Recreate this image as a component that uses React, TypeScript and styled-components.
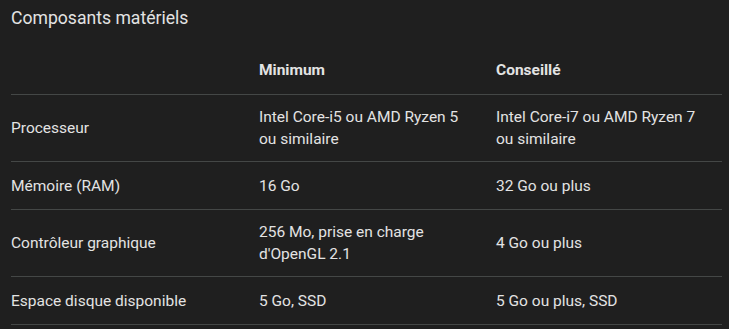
import styled, { createGlobalStyle } from 'styled-components'

const GlobalStyle = createGlobalStyle`
  html, body {
    margin: 0;
    background: #1f1f1f;
  }
  body {
    font-family: Roboto, "Liberation Sans", sans-serif;
    color: #e3e3e3;
  }
`

const Page = styled.div`
  padding: 5px 7px 0 11px;
`

const Title = styled.h2`
  margin: 0;
  font-size: 17.6px;
  font-weight: 400;
  line-height: 26px;
`

const Table = styled.div`
  display: grid;
  grid-template-columns: 248px 237px 1fr;
  margin-top: 16px;
`

const Cell = styled.div<{ $head?: boolean }>`
  display: flex;
  align-items: center;
  box-sizing: border-box;
  min-height: 48px;
  padding: ${(p) => (p.$head ? '10px 20px 12px 0' : '11px 20px 11px 0')};
  font-size: 15.5px;
  line-height: 22px;
  font-weight: ${(p) => (p.$head ? 700 : 400)};
  border-bottom: 1px solid #444746;
`

const rows = [
  ['Processeur', 'Intel Core-i5 ou AMD Ryzen 5 ou similaire', 'Intel Core-i7 ou AMD Ryzen 7 ou similaire'],
  ['Mémoire (RAM)', '16 Go', '32 Go ou plus'],
  ['Contrôleur graphique', "256 Mo, prise en charge d'OpenGL 2.1", '4 Go ou plus'],
  ['Espace disque disponible', '5 Go, SSD', '5 Go ou plus, SSD'],
]

const App = () => {
  return (
    <Page>
      <GlobalStyle />
      <Title>Composants matériels</Title>
      <Table>
        <Cell $head />
        <Cell $head>Minimum</Cell>
        <Cell $head>Conseillé</Cell>
        {rows.map((row) =>
          row.map((text, i) => <Cell key={row[0] + i}>{text}</Cell>)
        )}
      </Table>
    </Page>
  )
}

export default App
